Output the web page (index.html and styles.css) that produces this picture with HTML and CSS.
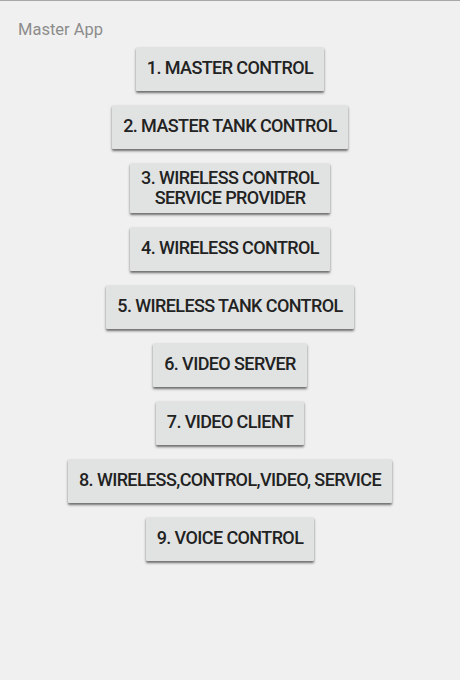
FILE: index.html
```html
<!DOCTYPE html>
<html>
<head>
<meta charset="utf-8">
<link rel="stylesheet" href="styles.css">
</head>
<body>
<div class="app">
  <div class="title">Master App</div>
  <div class="buttons">
    <button class="btn">1. MASTER CONTROL</button>
    <button class="btn">2. MASTER TANK CONTROL</button>
    <button class="btn two">3. WIRELESS CONTROL<br>SERVICE PROVIDER</button>
    <button class="btn">4. WIRELESS CONTROL</button>
    <button class="btn">5. WIRELESS TANK CONTROL</button>
    <button class="btn">6. VIDEO SERVER</button>
    <button class="btn">7. VIDEO CLIENT</button>
    <button class="btn">8. WIRELESS,CONTROL,VIDEO, SERVICE</button>
    <button class="btn">9. VOICE CONTROL</button>
  </div>
</div>
</body>
</html>
```
FILE: styles.css
```css
html, body {
  margin: 0;
  padding: 0;
  height: 100%;
}
body {
  background: #f0f0f0;
  font-family: Roboto, "Liberation Sans", sans-serif;
}
.app {
  border-top: 1px solid #a8a8a8;
  min-height: 679px;
}
.title {
  padding: 19px 0 0 18px;
  height: 28px;
  box-sizing: border-box;
  font-size: 16.5px;
  line-height: 20px;
  color: #8c8c8c;
}
.buttons {
  display: flex;
  flex-direction: column;
  align-items: center;
  gap: 15px;
  padding-top: 19px;
}
.btn {
  font-family: Roboto, "Liberation Sans", sans-serif;
  font-weight: 500;
  font-size: 18px;
  letter-spacing: -0.6px;
  line-height: 20px;
  color: #222;
  background: #e1e2e2;
  border: none;
  border-radius: 1px;
  padding: 10px 11px 13px 11px;
  height: 43px;
  box-sizing: border-box;
  box-shadow: 0 1.5px 2.5px rgba(0, 0, 0, 0.55);
  white-space: nowrap;
}
.btn.two {
  height: 49px;
  padding: 4px 11px 5px 11px;
}
```
